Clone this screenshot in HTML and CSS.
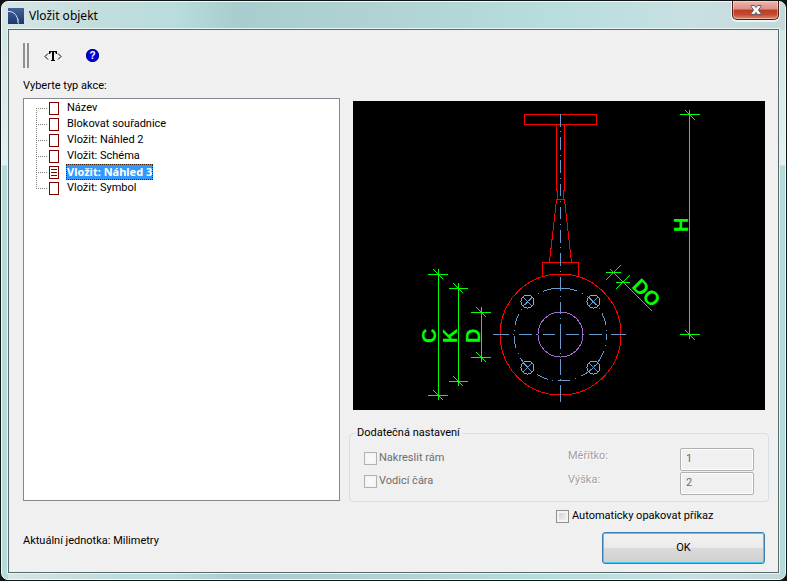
FILE: index.html
```html
<!DOCTYPE html>
<html lang="cs">
<head>
<meta charset="utf-8">
<title>Vložit objekt</title>
<link rel="stylesheet" href="styles.css">
</head>
<body>
<div class="window">
  <header class="titlebar">
    <svg class="app-icon" viewBox="0 0 16 16" aria-hidden="true">
      <defs><linearGradient id="app" x2="0" y2="1"><stop stop-color="#46639a"/><stop offset="1" stop-color="#1d3767"/></linearGradient></defs>
      <rect width="16" height="16" fill="url(#app)"/>
      <path d="M0 3.500C6 3 10 7.500 10 15" fill="none" stroke="#d4e2f2"/>
      <path d="M10.500 11v5" stroke="#8da5cb"/>
    </svg>
    <h1 class="title">Vložit objekt</h1>
    <button class="close" type="button" aria-label="Zavřít">
      <svg viewBox="0 0 12 10" aria-hidden="true"><path d="M1 .5h3.500L6 2.500 7.500.5H11v1L8.500 5 11 8.500v1H7.500L6 7.500 4.500 9.500H1v-1L3.500 5 1 1.500z" fill="#f6f6f6" stroke="#535669"/></svg>
    </button>
  </header>
  <main class="client">
    <div class="toolbar">
      <span class="grip"></span>
      <button class="tool" type="button" aria-label="Text">
        <svg viewBox="0 0 18 14" aria-hidden="true"><path d="M4 4.500L1 7.500l3 3M14 4.500l3 3-3 3" fill="none" stroke="#000"/><path d="M5 2h8v3h-1l-1-2h-1v8h1v1H7v-1h1V3H7L6 5H5z"/></svg>
      </button>
      <button class="tool help" type="button" aria-label="Nápověda">?</button>
    </div>
    <div class="columns">
      <section class="left">
        <h2 class="caption">Vyberte typ akce:</h2>
        <ul class="tree">
          <li><span class="page"></span><span class="name">Název</span></li>
          <li><span class="page"></span><span class="name">Blokovat souřadnice</span></li>
          <li><span class="page"></span><span class="name">Vložit: Náhled 2</span></li>
          <li><span class="page"></span><span class="name">Vložit: Schéma</span></li>
          <li class="selected"><span class="page"></span><span class="name">Vložit: Náhled 3</span></li>
          <li><span class="page"></span><span class="name">Vložit: Symbol</span></li>
        </ul>
        <p class="status">Aktuální jednotka: Milimetry</p>
      </section>
      <section class="right">
        <div class="preview">
          <svg viewBox="353 101 412 309" fill="none" shape-rendering="crispEdges">
            <g stroke="#f00">
              <path d="M524.500 114.500h72v10h-72zM556.500 125v65l1 0v9M564.500 125v65l-1 0v9M556.500 199.500h8M556.500 199.500L549.500 262M564.500 199.500L571.500 262M542.500 276v-13.500h36V276"/>
              <circle cx="560.500" cy="334.500" r="60.500"/>
            </g>
            <circle cx="560.500" cy="334.500" r="22.500" stroke="#a66cd4"/>
            <g stroke="#6699cc">
              <path d="M560.500 114v13m0 4v1m0 5v13m0 5v1m0 4v13m0 5v1m0 5v12m0 5v1m0 5v12m0 5v1m0 5v13m0 4v1m0 5v13m0 5v1m0 5v14m0 5v1m0 5v12m0 4v1m0 5v25m0 4v1m0 5v16m0 4v1m0 5v17"/>
              <path d="M493 334.500h16m4 0h1m5 0h13m4 0h1m6 0h12m5 0h1m5 0h13m4 0h1m5 0h13m4 0h1m4 0h15M554 288.500h13"/>
              <circle cx="560.500" cy="334.500" r="46.500" stroke-dasharray="12 5 1 5" stroke-dashoffset="6"/>
              <path d="M523 297l9 9m0-9l-9 9M589 306l9-9m-9 0l9 9M523 363l9 9m0-9l-9 9M589 363l9 9m0-9l-9 9"/>
            </g>
            <g stroke="#d49a62">
              <circle cx="527.500" cy="301.500" r="6.500"/><circle cx="593.500" cy="301.500" r="6.500"/>
              <circle cx="527.500" cy="367.500" r="6.500"/><circle cx="593.500" cy="367.500" r="6.500"/>
            </g>
            <g stroke="#0f0">
              <path d="M438.500 269v131M428 274.500h20M428 395.500h20M433 269l10 10M433 390l10 10"/>
              <path d="M458.500 283v103M449 288.500h19M449 381.500h19M453 283l10 10M453 376l10 10"/>
              <path d="M481.500 307v55M471 312.500h20M471 357.500h20M476 307l10 10M476 352l10 10"/>
              <path d="M689.500 110v229M680 114.500h20M680 334.500h20M685 110l10 10M685 330l10 10"/>
              <path d="M610 269l42 42M606 272.500h15M616 282.500h14M606 280l15-15M616 289l14-14"/>
            </g>
            <g class="dims">
              <text transform="translate(436 343) rotate(-90)">C</text>
              <text transform="translate(457 343) rotate(-90)">K</text>
              <text transform="translate(480 343) rotate(-90)">D</text>
              <text transform="translate(688 232) rotate(-90)">H</text>
              <text transform="translate(631 287) rotate(45)">DO</text>
            </g>
          </svg>
        </div>
        <fieldset class="extra" disabled>
          <legend>Dodatečná nastavení</legend>
          <div class="checks">
            <label class="check"><input type="checkbox">Nakreslit rám</label>
            <label class="check"><input type="checkbox">Vodicí čára</label>
          </div>
          <div class="fields">
            <div class="field"><label for="scale">Měřítko:</label><input id="scale" type="text" value="1"></div>
            <div class="field"><label for="height">Výška:</label><input id="height" type="text" value="2"></div>
          </div>
        </fieldset>
        <div class="actions">
          <label class="check repeat"><input type="checkbox">Automaticky opakovat příkaz</label>
          <button class="ok" type="button">OK</button>
        </div>
      </section>
    </div>
  </main>
</div>
</body>
</html>
```
FILE: styles.css
```css
* { box-sizing: border-box; }

body {
  margin: 0;
  background: #101414;
  color: #000;
  font: 11px/16px Roboto, "Noto Sans", sans-serif;
}

h1, h2, p, ul { margin: 0; padding: 0; font: inherit; }

button, input { margin: 0; font: inherit; color: inherit; }

.window {
  display: flex;
  flex-direction: column;
  min-height: calc(100vh - 2px);
  margin: 1px;
  padding: 0 6px 6px;
  border: 1px solid #eefafa;
  border-radius: 7px;
  background:
    linear-gradient(#d3e6e6, #e2f0f0 135px, #b4dada 136px) left 28px / 6px 100% no-repeat,
    linear-gradient(#d3e6e6, #e2f0f0 135px, #b4dada 136px) right 28px / 6px 100% no-repeat,
    linear-gradient(90deg, #d8e6e6, #c3dddd 12%, #b9dcdc 22%, #a9cdce 30%, #b0d2d2 48%, #b7dddd 70%, #c8e0e2 88%, #c5d8da);
}

.titlebar {
  display: flex;
  align-items: center;
  gap: 5px;
  height: 27px;
}

.app-icon { width: 16px; height: 16px; }

.title {
  flex: 1;
  font: 12px/16px "Noto Sans", sans-serif;
}

.close {
  align-self: flex-start;
  display: grid;
  place-items: center;
  width: 47px;
  height: 19px;
  margin-top: -1px;
  padding: 0;
  border: 1px solid #551b19;
  border-top: 0;
  border-radius: 0 0 5px 5px;
  background: linear-gradient(#efb5ad, #dc9085 45%, #bd3b25 50%, #c44a30 75%, #dd8a6e);
  box-shadow: inset 0 0 0 1px #ffffff66, 0 1px 0 1px #ffffffaa;
}

.close svg { width: 12px; height: 10px; }

.client {
  flex: 1;
  display: flex;
  flex-direction: column;
  padding: 12px 9px 8px 14px;
  border: 1px solid #596a6b;
  outline: 1px solid #e5f5f5;
  background: #f0f0f0;
}

.toolbar {
  display: flex;
  align-items: center;
  gap: 15px;
  height: 27px;
}

.grip {
  width: 6px;
  height: 25px;
  border: solid #909090;
  border-width: 0 2px;
}

.tool {
  display: grid;
  place-items: center;
  width: 18px;
  height: 18px;
  padding: 0;
  border: 0;
  background: none;
}

.tool svg { width: 18px; height: 14px; }

.help {
  width: 13px;
  height: 13px;
  margin-left: 9px;
  border-radius: 50%;
  background: #0000e0;
  box-shadow: inset 0 0 0 1px #000080;
  color: #fff;
  font: bold 10px/13px "Liberation Sans", sans-serif;
}

.columns {
  flex: 1;
  display: grid;
  grid-template-columns: 317fr 420fr;
  gap: 9px;
}

.left, .right {
  display: flex;
  flex-direction: column;
}

.caption { padding: 9px 0 4px; }

.tree {
  flex: 1;
  padding: 1px 0 0 12px;
  border: 1px solid #828790;
  background: #fff;
  list-style: none;
}

.tree li {
  display: flex;
  align-items: center;
  height: 16px;
  background:
    repeating-linear-gradient(90deg, #808080 0 1px, #fff 1px 2px) 0 8px / 12px 1px no-repeat,
    repeating-linear-gradient(#808080 0 1px, #fff 1px 2px) 0 0 / 1px 100% no-repeat;
}

.tree li:first-child { background-position: 0 8px, 0 8px; }

.tree li:last-child { background-size: 12px 1px, 1px 9px; }

.page {
  width: 10px;
  height: 13px;
  margin: 0 7px 0 13px;
  border: 1px solid #800000;
}

.selected .page {
  padding: 2px 1px;
  background: repeating-linear-gradient(#800000 0 1px, #fff 1px 3px) content-box;
}

.name {
  padding: 0 1px;
  line-height: 16px;
}

.selected .name {
  outline: 1px dotted #402000;
  outline-offset: -1px;
  background: #3399ff;
  color: #fff;
  font: bold 11px/16px "Noto Sans", sans-serif;
}

.status { padding: 32px 0 15px; }

.preview {
  flex: 1;
  margin: 32px 4px 15px;
  background: #000;
}

.preview svg { display: block; width: 100%; }

.dims {
  fill: #00ff00;
  font: bold 20px "Liberation Sans", sans-serif;
}

.extra {
  display: flex;
  justify-content: space-between;
  min-width: 0;
  margin: 0;
  padding: 7px 14px 6px;
  border: 1px solid #d5dfe5;
  border-radius: 4px;
}

.extra legend {
  margin-left: -9px;
  padding: 0 2px;
}

.checks {
  display: flex;
  flex-direction: column;
  gap: 7px;
  padding-top: 2px;
  color: #6d6d6d;
}

.check {
  display: flex;
  align-items: center;
  gap: 2px;
}

.check input {
  appearance: none;
  width: 13px;
  height: 13px;
  border: 1px solid #8e8f8f;
  background: linear-gradient(135deg, #cbcfd5, #f6f6f6);
  box-shadow: inset 0 0 0 2px #f4f4f4;
}

.check input:disabled {
  border-color: #b1b1b1;
  background: #f8f8f8;
}

.fields {
  display: grid;
  gap: 1px;
}

.field {
  display: grid;
  grid-template-columns: 112px 74px;
}

.field label {
  color: #a0a0a0;
  text-shadow: 1px 1px #fff;
}

.field input {
  width: 100%;
  height: 23px;
  padding: 0 5px 2px;
  border: 1px solid #afafaf;
  border-radius: 2px;
  background: #f0f0f0;
  box-shadow: inset 0 0 0 1px #fff;
  color: #6d6d6d;
}

.actions {
  display: flex;
  flex-direction: column;
  align-items: flex-end;
  gap: 8px;
  padding: 6px 4px 0 0;
}

.repeat {
  width: 209px;
  gap: 3px;
  white-space: nowrap;
}

.ok {
  width: 163px;
  height: 32px;
  border: 1px solid #3c7fb1;
  border-radius: 3px;
  background: linear-gradient(#f2f2f2, #ebebeb 48%, #dbdbdb 50%, #cfcfcf);
  box-shadow: inset 0 0 0 1px #48cbf2;
}
```
